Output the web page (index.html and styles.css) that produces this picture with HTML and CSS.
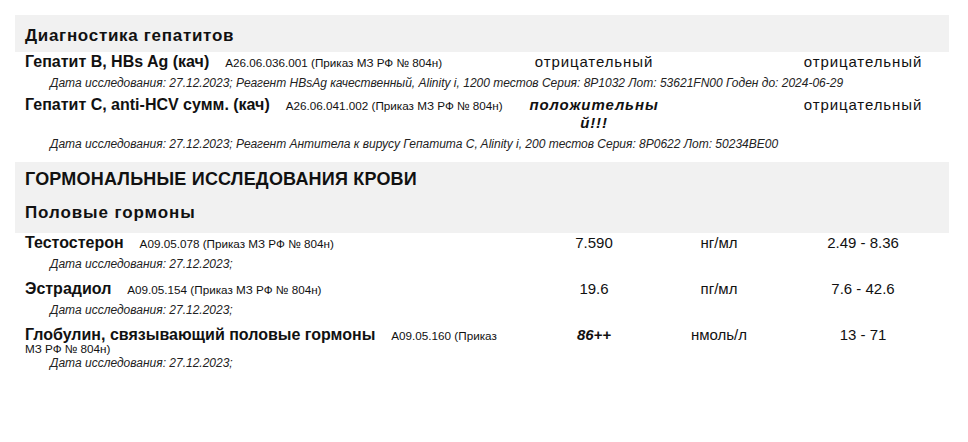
FILE: index.html
```html
<!DOCTYPE html>
<html lang="ru">
<head>
  <meta charset="UTF-8" />
  <meta name="viewport" content="width=device-width, initial-scale=1.0"/>
  <title>Результаты исследований</title>
  <link rel="stylesheet" href="styles.css">
</head>
<body>

  <div class="report">

    <div class="group group-hepatitis">
      <div class="group-head">
        <h3 class="group-title">Диагностика гепатитов</h3>
      </div>

      <div class="test">
        <div class="test-name"><b>Гепатит B, HBs Ag (кач)</b><span class="code">A26.06.036.001 (Приказ МЗ&nbsp;РФ&nbsp;№&nbsp;804н)</span></div>
        <div class="test-value qual">отрицательный</div>
        <div class="test-unit"></div>
        <div class="test-norm qual">отрицательный</div>
        <div class="test-date">Дата исследования: 27.12.2023; Реагент HBsAg качественный, Alinity i, 1200 тестов Серия: 8P1032 Лот: 53621FN00 Годен до: 2024-06-29</div>
      </div>

      <div class="test">
        <div class="test-name"><b>Гепатит C, anti-HCV сумм. (кач)</b><span class="code">A26.06.041.002 (Приказ МЗ&nbsp;РФ&nbsp;№&nbsp;804н)</span></div>
        <div class="test-value qual flag">положительны<br>й!!!</div>
        <div class="test-unit"></div>
        <div class="test-norm qual">отрицательный</div>
        <div class="test-date">Дата исследования: 27.12.2023; Реагент Антитела к вирусу Гепатита C, Alinity i, 200 тестов Серия: 8P0622 Лот: 50234BE00</div>
      </div>
    </div>

    <div class="group group-hormones">
      <div class="group-head">
        <h2 class="section-title">ГОРМОНАЛЬНЫЕ ИССЛЕДОВАНИЯ КРОВИ</h2>
        <h3 class="group-title sub">Половые гормоны</h3>
      </div>

      <div class="test">
        <div class="test-name"><b>Тестостерон</b><span class="code">A09.05.078 (Приказ МЗ&nbsp;РФ&nbsp;№&nbsp;804н)</span></div>
        <div class="test-value">7.590</div>
        <div class="test-unit">нг/мл</div>
        <div class="test-norm">2.49 - 8.36</div>
        <div class="test-date">Дата исследования: 27.12.2023;</div>
      </div>

      <div class="test">
        <div class="test-name"><b>Эстрадиол</b><span class="code">A09.05.154 (Приказ МЗ&nbsp;РФ&nbsp;№&nbsp;804н)</span></div>
        <div class="test-value">19.6</div>
        <div class="test-unit">пг/мл</div>
        <div class="test-norm">7.6 - 42.6</div>
        <div class="test-date">Дата исследования: 27.12.2023;</div>
      </div>

      <div class="test">
        <div class="test-name"><b>Глобулин, связывающий половые гормоны</b><span class="code">A09.05.160 (Приказ МЗ&nbsp;РФ&nbsp;№&nbsp;804н)</span></div>
        <div class="test-value flag">86++</div>
        <div class="test-unit">нмоль/л</div>
        <div class="test-norm">13 - 71</div>
        <div class="test-date">Дата исследования: 27.12.2023;</div>
      </div>
    </div>

  </div>

</body>
</html>
```

FILE: styles.css
```css
:root {
  --text: #111;
  --muted: #222;
  --band: #f1f1f1;
}

* {
  box-sizing: border-box;
}

body {
  margin: 0;
  padding: 15px 0 0 15px;
  background: #fff;
  color: var(--text);
  font-family: 'Liberation Sans', Arial, Helvetica, sans-serif;
}

.report {
  width: 934px;
}

.group-head {
  background-color: var(--band);
  padding: 11px 10px 6px;
}

.group-hormones {
  margin-top: 6px;
}

.group-hormones .group-head {
  padding-top: 6px;
  padding-bottom: 10px;
}

h2, h3 {
  margin: 0;
}

.section-title {
  font-size: 18px;
  line-height: 22px;
  letter-spacing: 0.2px;
}

.group-title {
  font-size: 17px;
  line-height: 20px;
  letter-spacing: 0.7px;
}

.group-title.sub {
  margin-top: 13px;
  letter-spacing: 0.9px;
}

.test {
  display: grid;
  grid-template-columns: 505px 148px 102px 176px;
  align-items: baseline;
  padding: 1px 0 7px;
}

.group-hormones .test {
  padding-bottom: 10px;
}

.test-name {
  padding-left: 10px;
  font-size: 11.7px;
  line-height: 13px;
  margin-bottom: -4px;
}

.test-name b {
  font-size: 16px;
}

.code {
  margin-left: 16px;
}

.test-value,
.test-unit,
.test-norm {
  font-size: 15px;
  line-height: 18px;
  text-align: center;
}

.test-norm {
  padding-left: 10px;
}

.qual {
  letter-spacing: 0.9px;
}

.flag {
  font-weight: bold;
  font-style: italic;
}

.test-date {
  grid-column: 1 / -1;
  padding-left: 35px;
  font-size: 12px;
  line-height: 10px;
  font-style: italic;
  color: var(--muted);
  margin-top: 7px;
}
```
